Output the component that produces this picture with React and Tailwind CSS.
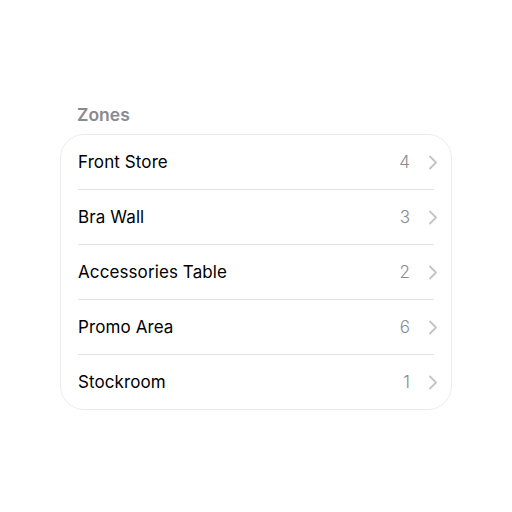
const ZONES = [
  { name: "Front Store", count: 4 },
  { name: "Bra Wall", count: 3 },
  { name: "Accessories Table", count: 2 },
  { name: "Promo Area", count: 6 },
  { name: "Stockroom", count: 1 },
];

const Chevron = () => (
  <svg width="10" height="15" viewBox="0 0 10 15" fill="none" className="ml-[18px]">
    <path d="M2 1.5L8 7.5L2 13.5" stroke="#c4c4c7" strokeWidth="1.8" strokeLinecap="round" strokeLinejoin="round" />
  </svg>
);

export default function App() {
  return (
    <div className="min-h-screen w-full bg-white font-['Inter',sans-serif]">
      <div className="pt-[104px] px-[60px]">
        {/* Section header */}
        <h2 className="pl-[17px] text-[17.5px] font-semibold text-[#8a8a8e] leading-[22px] mb-[8px]">Zones</h2>

        <div className="w-[392px] rounded-[24px] border border-[#ececee] bg-white overflow-hidden">
          {ZONES.map((z, i) => (
            <div key={z.name}>
              <div className="h-[54px] flex items-center pl-[17px] pr-[13px] pt-[2px]">
                <span className="text-[17px] text-black flex-1 tracking-[0.1px]">{z.name}</span>
                <span className="text-[17px] font-light text-[#8a8a8e]">{z.count}</span>
                <span className="flex -mt-[2px]">
                  <Chevron />
                </span>
              </div>
              {i < ZONES.length - 1 && <div className="h-px bg-[#e3e3e6] ml-[17px] mr-[17px]" />}
            </div>
          ))}
        </div>
      </div>
    </div>
  );
}
